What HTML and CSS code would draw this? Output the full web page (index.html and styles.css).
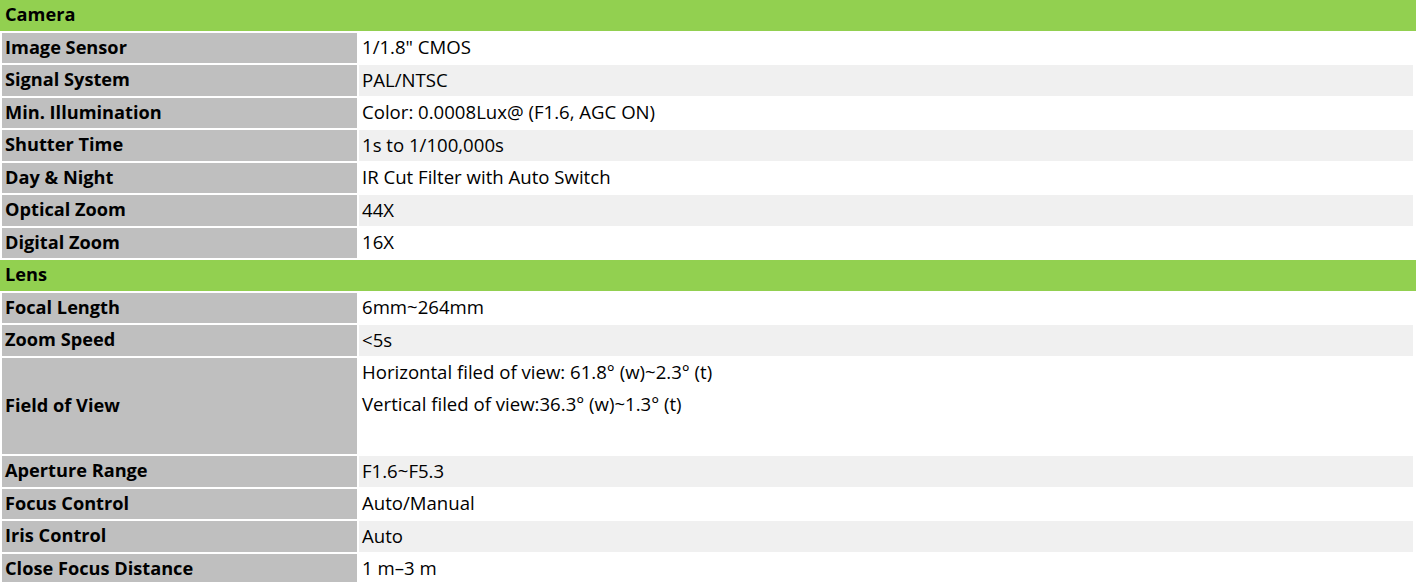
FILE: index.html
```html
<!DOCTYPE html>
<html>
<head>
<meta charset="utf-8">
<link rel="stylesheet" href="styles.css">
</head>
<body>
<div class="sheet">
  <div class="section-head">Camera</div>
  <div class="row"><div class="label">Image Sensor</div><div class="value">1/1.8" CMOS</div></div>
  <div class="row alt"><div class="label">Signal System</div><div class="value">PAL/NTSC</div></div>
  <div class="row"><div class="label">Min. Illumination</div><div class="value">Color: 0.0008Lux@ (F1.6, AGC ON)</div></div>
  <div class="row alt"><div class="label">Shutter Time</div><div class="value">1s to 1/100,000s</div></div>
  <div class="row"><div class="label">Day &amp; Night</div><div class="value">IR Cut Filter with Auto Switch</div></div>
  <div class="row alt"><div class="label">Optical Zoom</div><div class="value">44X</div></div>
  <div class="row"><div class="label">Digital Zoom</div><div class="value">16X</div></div>
  <div class="section-head">Lens</div>
  <div class="row"><div class="label">Focal Length</div><div class="value">6mm~264mm</div></div>
  <div class="row alt"><div class="label">Zoom Speed</div><div class="value">&lt;5s</div></div>
  <div class="row tall"><div class="label">Field of View</div><div class="value multi"><div class="line">Horizontal filed of view: 61.8° (w)~2.3° (t)</div><div class="line">Vertical filed of view:36.3° (w)~1.3° (t)</div></div></div>
  <div class="row alt"><div class="label">Aperture Range</div><div class="value">F1.6~F5.3</div></div>
  <div class="row"><div class="label">Focus Control</div><div class="value">Auto/Manual</div></div>
  <div class="row alt"><div class="label">Iris Control</div><div class="value">Auto</div></div>
  <div class="row"><div class="label">Close Focus Distance</div><div class="value">1 m–3 m</div></div>
</div>
</body>
</html>
```
FILE: styles.css
```css
html, body {
  margin: 0;
  padding: 0;
  background: #ffffff;
}
.sheet {
  width: 1416px;
  display: flex;
  flex-direction: column;
  gap: 2px;
  font-family: "Open Sans", "Noto Sans", sans-serif;
  font-size: 18.6px;
  color: #000;
}
.section-head {
  box-sizing: border-box;
  height: 30.5px;
  line-height: 28.5px;
  padding-bottom: 2px;
  background: #92d050;
  font-weight: 700;
  font-size: 18.2px;
  padding-left: 5px;
}
.row {
  display: grid;
  grid-template-columns: 355px 1054px;
  column-gap: 2px;
  margin-left: 2px;
  height: 30.5px;
}
.row.tall {
  height: 96.5px;
}
.label {
  background: #bfbfbf;
  font-weight: 700;
  font-size: 18.2px;
  padding-left: 3px;
  padding-bottom: 2px;
  display: flex;
  align-items: center;
}
.value {
  background: #ffffff;
  padding-left: 3px;
  padding-bottom: 2px;
  display: flex;
  align-items: center;
}
.row.alt .value {
  background: #f0f0f0;
}
.value.multi {
  flex-direction: column;
  align-items: flex-start;
  padding-bottom: 0;
}
.line {
  height: 32.5px;
  line-height: 28px;
}
```
